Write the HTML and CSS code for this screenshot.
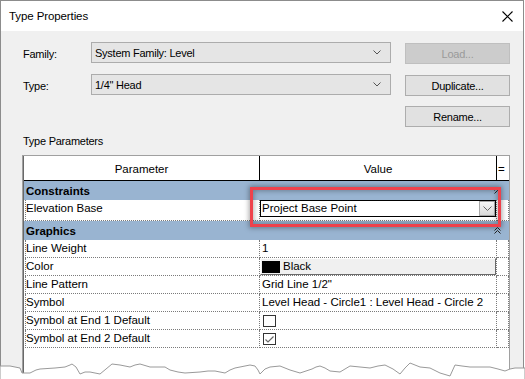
FILE: index.html
```html
<!DOCTYPE html>
<html>
<head>
<meta charset="utf-8">
<link rel="stylesheet" href="styles.css">
</head>
<body>
<div class="window">
  <div class="titlebar">
    <span class="title">Type Properties</span>
    <svg class="close" width="11" height="11" viewBox="0 0 11 11"><path d="M0.5 0.5 L10.5 10.5 M10.5 0.5 L0.5 10.5" stroke="#000" stroke-width="1.1" fill="none"/></svg>
  </div>
  <div class="content">
    <div class="form">
      <span class="lbl">Family:</span>
      <div class="combo"><span>System Family: Level</span><svg class="chev" width="8" height="5" viewBox="0 0 8 5"><path d="M0.5 0.5 L4 4 L7.5 0.5" stroke="#555" fill="none"/></svg></div>
      <div class="btn disabled">Load...</div>
      <span class="lbl">Type:</span>
      <div class="combo"><span>1/4" Head</span><svg class="chev" width="8" height="5" viewBox="0 0 8 5"><path d="M0.5 0.5 L4 4 L7.5 0.5" stroke="#555" fill="none"/></svg></div>
      <div class="btn">Duplicate...</div>
      <span></span>
      <span></span>
      <div class="btn">Rename...</div>
    </div>
    <div class="section">Type Parameters</div>
    <div class="ptable">
      <div class="pinner">
        <div class="thead">
          <div class="th">Parameter</div>
          <div class="th">Value</div>
          <div class="th eq">=</div>
        </div>
        <div class="group">
          <span>Constraints</span>
          <svg class="gchev" width="7" height="7" viewBox="0 0 7 7"><path d="M0.5 3.5 L3.5 0.5 L6.5 3.5 M0.5 6.5 L3.5 3.5 L6.5 6.5" stroke="#222" fill="none"/></svg>
        </div>
        <div class="row tall">
          <div class="pc">Elevation Base</div>
          <div class="vc">
            <div class="dd">
              <span>Project Base Point</span>
              <span class="ddbtn"><svg width="9" height="5" viewBox="0 0 9 5"><path d="M0.5 0.5 L4.5 4.5 L8.5 0.5" stroke="#666" fill="none"/></svg></span>
            </div>
          </div>
          <div class="ec"></div>
        </div>
        <div class="group">
          <span>Graphics</span>
          <svg class="gchev" width="7" height="7" viewBox="0 0 7 7"><path d="M0.5 3.5 L3.5 0.5 L6.5 3.5 M0.5 6.5 L3.5 3.5 L6.5 6.5" stroke="#222" fill="none"/></svg>
        </div>
        <div class="row"><div class="pc">Line Weight</div><div class="vc">1</div><div class="ec"></div></div>
        <div class="row"><div class="pc">Color</div><div class="vc"><div class="colorbtn"><span class="swatch"></span><span>Black</span></div></div><div class="ec"></div></div>
        <div class="row"><div class="pc">Line Pattern</div><div class="vc">Grid Line 1/2"</div><div class="ec"></div></div>
        <div class="row"><div class="pc">Symbol</div><div class="vc">Level Head - Circle1 : Level Head - Circle 2</div><div class="ec"></div></div>
        <div class="row"><div class="pc">Symbol at End 1 Default</div><div class="vc"><span class="cb"></span></div><div class="ec"></div></div>
        <div class="row"><div class="pc">Symbol at End 2 Default</div><div class="vc"><span class="cb"><svg width="11" height="11" viewBox="0 0 11 11"><path d="M1.5 5.5 L4 8 L9.5 2.5" stroke="#666" stroke-width="1.2" fill="none"/></svg></span></div><div class="ec"></div></div>
      </div>
    </div>
  </div>
  <div class="highlight"></div>
  <svg class="torn" width="525" height="24" viewBox="0 0 525 24">
    <polygon points="0,10 10,10 20,12 22,17 30,17 36,14 40,13 55,12 65,11 70,9 72,8 76,11 80,18 85,16 90,16 95,17 100,18 106,13 112,8 120,9 125,10 130,11 135,9 140,8 150,11 165,11 170,14 178,16 185,17 200,16 208,15 215,15 225,17 230,14 235,12 245,10 250,9 255,10 258,14 260,18 265,13 270,11 280,10 285,12 290,14 300,17 306,15 312,13 316,11 320,10 325,12 330,15 340,16 350,10 360,11 370,12 378,10 385,9 393,13 400,18 405,12 410,7 415,9 420,11 430,12 436,15 440,17 450,20 455,9 462,10 470,11 480,11 490,11 498,13 505,15 510,13 515,12 525,12 525,24 0,24" fill="#fff" stroke="#9a9a9a" stroke-width="1"/>
  </svg>
</div>
</body>
</html>
```

FILE: styles.css
```css
* { box-sizing: border-box; margin: 0; padding: 0; }
html, body { width: 525px; height: 379px; overflow: hidden; background: #fff; }
body { font-family: "Liberation Sans", Arial, sans-serif; font-size: 11px; color: #000; }

.window {
  position: relative;
  width: 524px;
  height: 379px;
  border: 1px solid #8c8c8c;
  border-bottom: none;
  background: #f0f0f0;
  display: flex;
  flex-direction: column;
}

.titlebar {
  height: 30px;
  background: #fff;
  display: flex;
  align-items: center;
  justify-content: space-between;
  padding: 0 10px 0 8px;
  flex: none;
}
.title { font-size: 11.5px; letter-spacing: -0.1px; color: #000; }
.close { display: block; }

.content {
  flex: 1;
  display: flex;
  flex-direction: column;
  padding: 12px 13px 0 21px;
  min-height: 0;
}

.form {
  display: grid;
  grid-template-columns: 69px 300px 1fr;
  grid-template-rows: 22px 21px 21px;
  row-gap: 10px;
  align-items: start;
  letter-spacing: -0.25px;
}
.lbl { align-self: center; padding-left: 1px; }
.combo {
  height: 21px;
  margin-top: -1px;
  background: #e5e5e5;
  border: 1px solid #acacac;
  display: flex;
  align-items: center;
  justify-content: space-between;
  padding: 0 9px 0 3px;
}
.chev { display: block; }
.btn {
  height: 21px;
  margin-left: 14px;
  background: #e1e1e1;
  border: 1px solid #adadad;
  display: flex;
  align-items: center;
  justify-content: center;
}
.btn.disabled { background: #cccccc; border-color: #bfbfbf; color: #9a9a9a; }

.section { margin-top: 7px; height: 15px; line-height: 15px; padding-left: 1px; letter-spacing: -0.25px; }

.ptable {
  margin-top: 6px;
  flex: 1;
  background: #fff;
  border-top: 1px solid #a0a0a0;
  border-left: 1px solid #a0a0a0;
  border-right: 1px solid #a0a0a0;
  min-height: 0;
}
.pinner {
  height: 100%;
  border-left: 1px solid #696969;
  font-size: 11.5px;
}

.thead {
  display: grid;
  grid-template-columns: 236px 237px 12px;
  height: 25px;
  border-bottom: 1px solid #000;
}
.th {
  border-right: 1px solid #000;
  display: flex;
  align-items: center;
  justify-content: center;
  padding-top: 1px;
}
.th.eq { border-right: none; justify-content: flex-start; padding-left: 1px; }

.group {
  height: 19px;
  background: #99b4d1;
  font-weight: bold;
  display: flex;
  align-items: center;
  justify-content: space-between;
  padding: 0 8px 0 2px;
}
.gchev { display: block; }

.row {
  display: grid;
  grid-template-columns: 235px 237px 12px;
  height: 18px;
  padding-left: 1px;
  line-height: 17px;
}
.row.tall { height: 21px; }
.pc {
  border-left: 1px dotted #7a7a7a;
  border-right: 1px dotted #7a7a7a;
  border-bottom: 1px dotted #7a7a7a;
  white-space: nowrap;
}
.vc {
  border-right: 1px dotted #7a7a7a;
  border-bottom: 1px dotted #7a7a7a;
  padding-left: 2px;
  white-space: nowrap;
}
.ec {
  border-right: 1px dotted #7a7a7a;
  border-bottom: 1px dotted #7a7a7a;
}
.row.tall .vc { padding-left: 0; }

.dd {
  width: 236px;
  height: 17px;
  border: 1px solid #000;
  background: #fff;
  display: flex;
  align-items: center;
  justify-content: space-between;
  padding-left: 1px;
  line-height: 15px;
}
.ddbtn {
  width: 16px;
  height: 15px;
  background: linear-gradient(#f6f6f6, #dadada);
  border: 1px solid #a8a8a8;
  display: flex;
  align-items: center;
  justify-content: center;
}
.ddbtn svg { display: block; }

.row .vc .colorbtn {
  margin-left: -2px;
  width: 236px;
  height: 17px;
  background: #f0f0f0;
  border-top: 1px solid #fff;
  border-left: 1px solid #fff;
  border-right: 1px solid #696969;
  border-bottom: 1px solid #696969;
  display: flex;
  align-items: center;
  gap: 3px;
  padding-left: 1px;
  line-height: 15px;
}
.swatch { width: 18px; height: 12px; background: #000; display: block; }

.cb {
  display: inline-block;
  width: 13px;
  height: 12px;
  border: 1px solid #333;
  background: #fff;
  margin-left: 1px;
  margin-top: 3px;
  vertical-align: top;
  position: relative;
}
.cb svg { display: block; position: absolute; left: 0; top: 0; }

.highlight {
  position: absolute;
  left: 249px;
  top: 186px;
  width: 251px;
  height: 40px;
  border: 3px solid #ee424c;
  box-shadow: 0 0 5px 1px rgba(0,0,0,0.35), inset 0 0 5px 1px rgba(0,0,0,0.3);
}

.torn {
  position: absolute;
  left: -1px;
  top: 355px;
  display: block;
}
```
